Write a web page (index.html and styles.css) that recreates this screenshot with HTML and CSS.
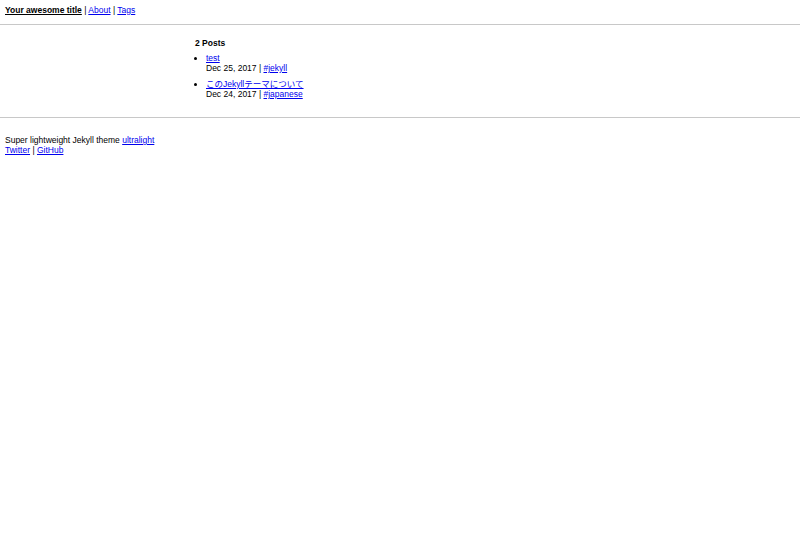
FILE: index.html
```html
<!DOCTYPE html>
<html lang="ja">
<head>
    <meta charset="UTF-8">
    <meta name="viewport" content="width=device-width, initial-scale=1.0">
    <title>Your awesome title</title>
    <link rel="stylesheet" href="styles.css">
</head>
<body>
    <header class="site-header">
        <a class="site-title" href="#">Your awesome title</a> | <a href="#">About</a> | <a href="#">Tags</a>
    </header>

    <div class="main-wrap">
        <main class="content">
            <h2 class="post-count">2 Posts</h2>
            <ul class="post-list">
                <li>
                    <a href="#">test</a><br>
                    Dec 25, 2017 | <a href="#">#jekyll</a>
                </li>
                <li>
                    <a href="#">このJekyllテーマについて</a><br>
                    Dec 24, 2017 | <a href="#">#japanese</a>
                </li>
            </ul>
        </main>
    </div>

    <footer class="site-footer">
        Super lightweight Jekyll theme <a href="#">ultralight</a><br>
        <a href="#">Twitter</a> | <a href="#">GitHub</a>
    </footer>
</body>
</html>
```

FILE: styles.css
```css
* {
    margin: 0;
    padding: 0;
    box-sizing: border-box;
}

body {
    font-family: "Liberation Sans", Arial, "Noto Sans CJK JP", sans-serif;
    font-size: 8.5px;
    line-height: 10px;
    color: #000;
    background: #fff;
}

a {
    color: #0000ee;
}

.site-header {
    padding: 5px 5px 9px;
    border-bottom: 1px solid #c8c8c8;
}

.site-title {
    color: #000;
    font-weight: bold;
}

/* the post list sits in a centred column, rule runs full width */
.main-wrap {
    border-bottom: 1px solid #c8c8c8;
}

.content {
    width: 410px;
    margin: 0 auto;
    padding: 13px 0 18px;
}

.post-count {
    font-size: 8.5px;
    font-weight: bold;
    margin-bottom: 5px;
}

.post-list {
    padding-left: 11px;
}

.post-list li {
    margin-bottom: 6px;
}

.post-list li:last-child {
    margin-bottom: 0;
}

.site-footer {
    padding: 17px 5px;
}
```
